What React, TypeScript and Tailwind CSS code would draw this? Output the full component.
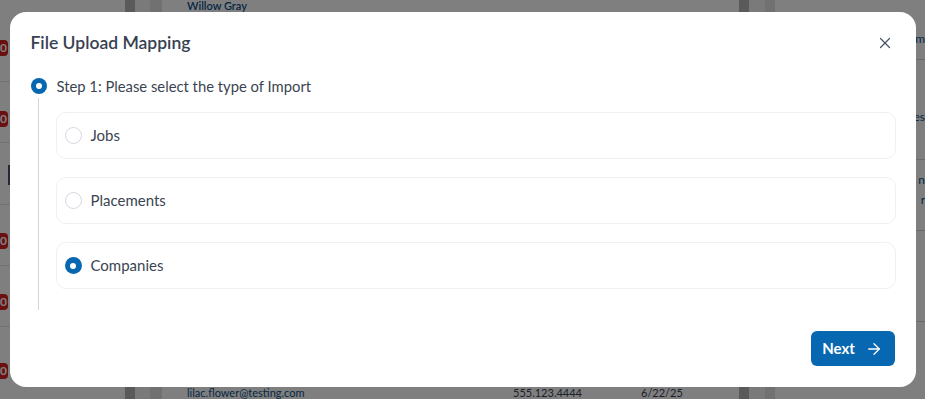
import React, { useState } from 'react';
import { X, ArrowRight } from 'lucide-react';

const importTypes = [
  { id: 'jobs', label: 'Jobs' },
  { id: 'placements', label: 'Placements' },
  { id: 'companies', label: 'Companies' },
];

const Badge: React.FC = () => (
  <span className="inline-block rounded-r bg-[#d42020] pr-[1px] text-[12px] leading-[16px] font-bold text-white">0</span>
);

const Background: React.FC = () => (
  <div className="flex h-[399px] w-full overflow-hidden bg-white" style={{ fontFamily: 'Lato, "Open Sans", sans-serif' }}>
    <div className="flex w-[125px] shrink-0 flex-col">
      <div className="h-[82px] border-b border-gray-200 pt-[34px]">
        <Badge />
      </div>
      <div className="h-[61px] border-b border-gray-200 pt-[23px]">
        <Badge />
      </div>
      <div className="h-[62px] border-b border-gray-200 pt-[22px]">
        <span className="ml-[8px] inline-block h-[20px] w-[3px] bg-gray-600" />
      </div>
      <div className="h-[61px] border-b border-gray-200 pt-[22px]">
        <Badge />
      </div>
      <div className="h-[61px] border-b border-gray-200 pt-[22px]">
        <Badge />
      </div>
      <div className="flex-1 pt-[30px]">
        <Badge />
      </div>
    </div>
    <div className="w-[10px] shrink-0 bg-[#b4b4b4]" />
    <div className="w-[15px] shrink-0 bg-[#f4f4f4]" />
    <div className="w-[12px] shrink-0 bg-[#e2e2e2]" />
    <div className="flex flex-1 flex-col justify-between pl-[25px]">
      <div className="text-[11px] leading-[12px] font-semibold text-[#0b4f8a]">Willow Gray</div>
      <div className="flex text-[11px] leading-[12px] text-[#0b4f8a]">
        <span className="w-[326px]">lilac.flower@testing.com</span>
        <span className="w-[128px] text-gray-700">555.123.4444</span>
        <span className="text-gray-700">6/22/25</span>
      </div>
    </div>
    <div className="w-[10px] shrink-0 bg-[#b4b4b4]" />
    <div className="w-[16px] shrink-0 bg-[#f4f4f4]" />
    <div className="w-[10px] shrink-0 bg-[#e2e2e2]" />
    <div className="w-[16px] shrink-0 bg-white" />
    <div className="flex w-[134px] shrink-0 flex-col text-right text-[12px] text-[#0b4f8a]">
      <div className="h-[60px] border-b border-gray-300 pt-[30px]">m</div>
      <div className="h-[100px] border-b border-gray-300 pt-[48px]">es</div>
      <div className="h-[71px] border-b border-gray-300 pt-[10px] leading-[20px]">n<br />r</div>
      <div className="h-[91px] border-b border-gray-300" />
    </div>
  </div>
);

export default function App() {
  const [selected, setSelected] = useState('companies');

  return (
    <div className="relative h-[399px] w-[925px] overflow-hidden">
      <Background />
      <div className="fixed inset-0 flex items-center justify-center bg-black/50" style={{ fontFamily: 'Lato, "Open Sans", sans-serif' }}>
        <div className="flex h-[375px] w-[906px] flex-col rounded-2xl bg-white px-[21px] pt-[19px] pb-[21px]">
          <div className="flex items-center justify-between">
            <h2 className="text-[17.5px] leading-[24px] font-semibold text-[#374151]">File Upload Mapping</h2>
            <button className="mr-[1px] text-[#475569]">
              <X className="h-[18px] w-[18px]" strokeWidth={1.75} />
            </button>
          </div>

          <div className="mt-[19px] flex items-center gap-[10px]">
            <span className="flex h-[16px] w-[16px] items-center justify-center rounded-full bg-[#0867b1]">
              <span className="h-[6px] w-[6px] rounded-full bg-white" />
            </span>
            <span className="text-[14.8px] leading-[24px] text-[#3b4452]">Step 1: Please select the type of Import</span>
          </div>

          <div className="ml-[7px] flex flex-col gap-[18px] border-l border-[#cfd6de] pt-[14px] pb-[21px] pl-[17px]">
            {importTypes.map((t) => (
              <button
                key={t.id}
                onClick={() => setSelected(t.id)}
                className="flex h-[47px] w-[840px] items-center gap-[9px] rounded-[10px] border border-[#eef0f4] px-[8px] text-left"
              >
                {selected === t.id ? (
                  <span className="flex h-[17px] w-[17px] items-center justify-center rounded-full bg-[#0867b1]">
                    <span className="h-[6px] w-[6px] rounded-full bg-white" />
                  </span>
                ) : (
                  <span className="h-[17px] w-[17px] rounded-full border border-[#d3d7df]" />
                )}
                <span className="text-[15px] text-[#3b4452]">{t.label}</span>
              </button>
            ))}
          </div>

          <div className="mt-auto flex justify-end">
            <button className="flex h-[35px] w-[84px] items-center justify-center gap-[10px] rounded-md bg-[#0867b1] text-[15px] font-bold text-white">
              Next
              <ArrowRight className="h-[18px] w-[18px]" strokeWidth={1.75} />
            </button>
          </div>
        </div>
      </div>
    </div>
  );
}
